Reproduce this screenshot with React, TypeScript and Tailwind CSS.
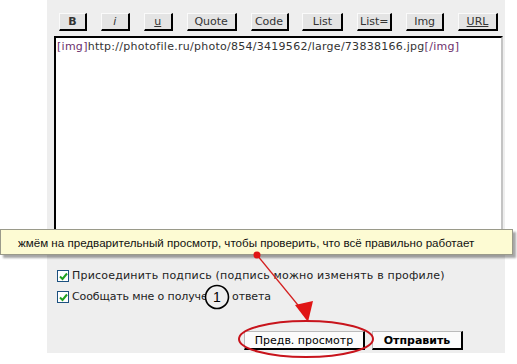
import { useState } from 'react'

const toolbar = [
  { label: 'B', w: 'w-[28px]', cls: 'font-bold' },
  { label: 'i', w: 'w-[29px]', cls: 'italic' },
  { label: 'u', w: 'w-[29px]', cls: 'underline' },
  { label: 'Quote', w: 'w-[50px]', cls: '' },
  { label: 'Code', w: 'w-[38px]', cls: '' },
  { label: 'List', w: 'w-[41px]', cls: '' },
  { label: 'List=', w: 'w-[35px]', cls: '' },
  { label: 'Img', w: 'w-[38px]', cls: '' },
  { label: 'URL', w: 'w-[40px]', cls: 'underline' },
]

function Checkbox({ checked }: { checked: boolean }) {
  return (
    <span className="w-[12px] h-[12px] border border-[#1c5180] bg-white flex items-center justify-center shrink-0">
      {checked && (
        <svg width="9" height="9" viewBox="0 0 9 9">
          <path d="M1 4.5 L3.5 7 L8 1.5" fill="none" stroke="#21a121" strokeWidth="2" />
        </svg>
      )}
    </span>
  )
}

export default function App() {
  const [sig, setSig] = useState(true)
  const [notify, setNotify] = useState(true)

  return (
    <div className="relative w-[517px] h-[364px] bg-white overflow-hidden" style={{ fontFamily: '"DejaVu Sans", Verdana, sans-serif' }}>
      <div className="ml-[47px] w-[458px] h-[353px] bg-[#eeeeee] pl-[7px] pr-[2px]">
        {/* bbcode toolbar */}
        <div className="flex justify-between pt-[13px] pl-[5px] pr-[5px]">
          {toolbar.map((b) => (
            <button
              key={b.label}
              className={`${b.w} h-[18px] bg-[#e4e4e4] border border-t-[#fafafa] border-l-[#fafafa] border-r-2 border-b-2 border-r-black border-b-black text-[11px] leading-none text-[#333] ${b.cls}`}
            >
              {b.label}
            </button>
          ))}
        </div>

        {/* message box */}
        <div className="mt-[5px] h-[212px] bg-white border-t-2 border-l-2 border-t-black border-l-black border-r-2 border-b-2 border-r-[#c4c4c4] border-b-[#c4c4c4] pl-[1px] pt-[2px] text-[11px] tracking-[0.27px] leading-[14px] text-[#333]">
          <span className="text-[#6c2f6c]">[img]</span>http://photofile.ru/photo/854/3419562/large/73838166.jpg<span className="text-[#6c2f6c]">[/img]</span>
        </div>

        {/* options */}
        <div className="mt-[22px] pl-[3px] flex flex-col gap-[9px] text-[11px] leading-[12px] text-[#222]">
          <label className="flex items-center gap-[3px] tracking-[0.2px]" onClick={() => setSig(!sig)}>
            <Checkbox checked={sig} />
            <span>Присоединить подпись (подпись можно изменять в профиле)</span>
          </label>
          <label className="flex items-center gap-[3px] tracking-[-0.12px]" onClick={() => setNotify(!notify)}>
            <Checkbox checked={notify} />
            <span>Сообщать мне о получении ответа</span>
          </label>
        </div>

        {/* submit */}
        <div className="flex justify-end gap-[7px] pr-[40px] mt-[28px]">
          <button className="w-[121px] h-[19px] bg-[#fbfbfb] border border-t-[#bbb] border-l-[#bbb] border-r-2 border-b-2 border-r-black border-b-black text-[11px] leading-none text-black">
            Предв. просмотр
          </button>
          <button className="w-[91px] h-[19px] bg-[#fbfbfb] border border-t-[#bbb] border-l-[#bbb] border-r-2 border-b-2 border-r-black border-b-black text-[11px] font-bold leading-none text-black">
            Отправить
          </button>
        </div>
      </div>

      {/* hint callout */}
      <div
        className="absolute left-0 top-[229px] w-[513px] h-[26px] bg-[#fdfbd3] border border-[#9a9a8a] shadow-[3px_3px_2px_rgba(0,0,0,0.35)] flex items-center pl-[17px] pt-[1px] text-[11.6px] text-[#111]"
        style={{ fontFamily: '"Liberation Sans", Arial, sans-serif' }}
      >
        жмём на предварительный просмотр, чтобы проверить, что всё правильно работает
      </div>

      {/* annotation */}
      <svg className="absolute inset-0 pointer-events-none" width="517" height="364">
        <line x1="257" y1="255" x2="302" y2="310" stroke="#d42020" strokeWidth="1.2" />
        <polygon points="295,305 313,301 308,322" fill="#e01515" />
        <circle cx="257" cy="255" r="3.5" fill="#e01515" />
        <ellipse cx="306" cy="339" rx="67" ry="18" fill="none" stroke="#c8141c" strokeWidth="2" />
        <circle cx="217" cy="297" r="11.5" fill="#eeeeee" stroke="#000" strokeWidth="1.6" />
        <text x="217" y="302" textAnchor="middle" fontSize="14" fontFamily="Liberation Sans, Arial, sans-serif" fill="#000">1</text>
      </svg>
    </div>
  )
}
